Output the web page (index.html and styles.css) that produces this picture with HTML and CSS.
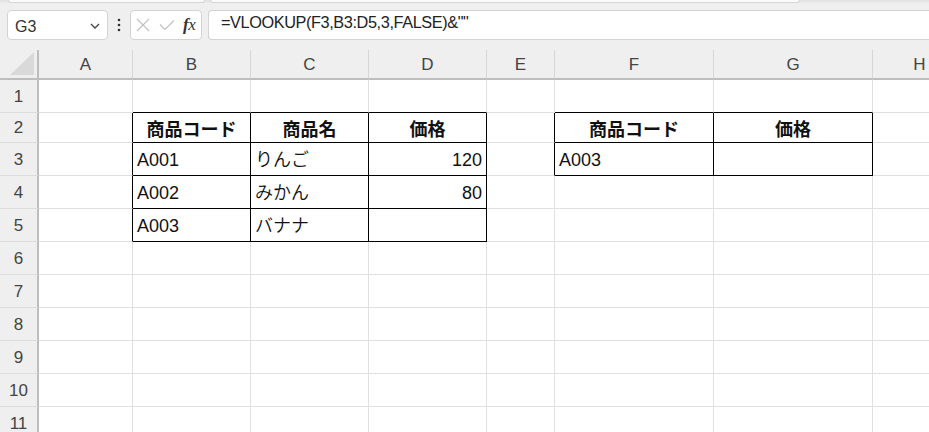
FILE: index.html
```html
<!DOCTYPE html>
<html lang="ja">
<head>
<meta charset="utf-8">
<link rel="stylesheet" href="styles.css">
</head>
<body>
<div class="app">
  <div class="ribbon-edge"><div class="rb rb1"></div><div class="rb rb2"></div></div>
  <div class="fbar">
    <div class="namebox">
      <span class="nb-text">G3</span>
      <svg class="chev" width="10" height="6" viewBox="0 0 10 6"><path d="M1 1 L5 5 L9 1" fill="none" stroke="#444" stroke-width="1.3"/></svg>
    </div>
    <div class="more">
      <svg width="4" height="14" viewBox="0 0 4 14"><circle cx="2" cy="2" r="1.3" fill="#333"/><circle cx="2" cy="7" r="1.3" fill="#333"/><circle cx="2" cy="12" r="1.3" fill="#333"/></svg>
    </div>
    <div class="btns">
      <svg class="ico" width="14" height="14" viewBox="0 0 14 14"><path d="M1 1 L13 13 M13 1 L1 13" stroke="#c2c2c2" stroke-width="1.2" fill="none"/></svg>
      <svg class="ico" width="16" height="12" viewBox="0 0 16 12"><path d="M1 5.5 L6 10.5 L15 1.5" stroke="#c2c2c2" stroke-width="1.2" fill="none"/></svg>
      <span class="fx"><i>f</i><span class="x">x</span></span>
    </div>
    <div class="formula"><span class="ftext">=VLOOKUP(F3,B3:D5,3,FALSE)&amp;""</span></div>
  </div>

  <div class="sheet">
    <!-- header row -->
    <div class="corner"><svg width="24" height="23" viewBox="0 0 24 23"><polygon points="24,0 24,23 0,23" fill="#d9d9d9"/></svg></div>
    <div class="ch">A</div><div class="ch">B</div><div class="ch">C</div><div class="ch">D</div><div class="ch">E</div><div class="ch">F</div><div class="ch">G</div><div class="ch">H</div>

    <!-- row 1 -->
    <div class="rh">1</div>
    <div class="c"></div><div class="c bb"></div><div class="c bb"></div><div class="c bb"></div><div class="c"></div><div class="c bb"></div><div class="c bb"></div><div class="c"></div>

    <!-- row 2 -->
    <div class="rh">2</div>
    <div class="c br"></div>
    <div class="c t hd">商品コード</div>
    <div class="c t hd">商品名</div>
    <div class="c t hd">価格</div>
    <div class="c br"></div>
    <div class="c t hd">商品コード</div>
    <div class="c t hd">価格</div>
    <div class="c"></div>

    <!-- row 3 -->
    <div class="rh">3</div>
    <div class="c br"></div>
    <div class="c t">A001</div>
    <div class="c t jp">りんご</div>
    <div class="c t num">120</div>
    <div class="c br"></div>
    <div class="c t">A003</div>
    <div class="c t"></div>
    <div class="c"></div>

    <!-- row 4 -->
    <div class="rh">4</div>
    <div class="c br"></div>
    <div class="c t">A002</div>
    <div class="c t jp">みかん</div>
    <div class="c t num">80</div>
    <div class="c"></div>
    <div class="c"></div>
    <div class="c"></div>
    <div class="c"></div>

    <!-- row 5 -->
    <div class="rh">5</div>
    <div class="c br"></div>
    <div class="c t">A003</div>
    <div class="c t jp">バナナ</div>
    <div class="c t"></div>
    <div class="c"></div><div class="c"></div><div class="c"></div><div class="c"></div>

    <div class="rh">6</div>
    <div class="c"></div><div class="c"></div><div class="c"></div><div class="c"></div><div class="c"></div><div class="c"></div><div class="c"></div><div class="c"></div>
    <div class="rh">7</div>
    <div class="c"></div><div class="c"></div><div class="c"></div><div class="c"></div><div class="c"></div><div class="c"></div><div class="c"></div><div class="c"></div>
    <div class="rh">8</div>
    <div class="c"></div><div class="c"></div><div class="c"></div><div class="c"></div><div class="c"></div><div class="c"></div><div class="c"></div><div class="c"></div>
    <div class="rh">9</div>
    <div class="c"></div><div class="c"></div><div class="c"></div><div class="c"></div><div class="c"></div><div class="c"></div><div class="c"></div><div class="c"></div>
    <div class="rh">10</div>
    <div class="c"></div><div class="c"></div><div class="c"></div><div class="c"></div><div class="c"></div><div class="c"></div><div class="c"></div><div class="c"></div>
    <div class="rh">11</div>
    <div class="c"></div><div class="c"></div><div class="c"></div><div class="c"></div><div class="c"></div><div class="c"></div><div class="c"></div><div class="c"></div>
  </div>
</div>
</body>
</html>
```

FILE: styles.css
```css
* { box-sizing: border-box; }
html, body {
  margin: 0;
  padding: 0;
  width: 929px;
  height: 432px;
  overflow: hidden;
  background: #efefef;
  font-family: "Liberation Sans", "Noto Sans CJK JP", sans-serif;
}
.app {
  display: block;
  width: 929px;
  height: 432px;
  overflow: hidden;
}
.ribbon-edge {
  height: 3px;
  display: flex;
  gap: 5px;
  background: linear-gradient(#e2e2e2, #ebebeb);
}
.rb {
  height: 3px;
  background: #fafafa;
  border: 1px solid #d6d6d6;
  border-top: none;
  border-radius: 0 0 4px 4px;
}
.rb1 { margin-left: 8px; width: 197px; }
.rb2 { width: 590px; }

.fbar {
  display: flex;
  align-items: stretch;
  height: 30px;
  margin-top: 7px;
  margin-bottom: 10px;
}
.namebox {
  width: 101px;
  flex: none;
  margin-left: 7px;
  background: #fff;
  border: 1px solid #d3d3d3;
  border-radius: 4px;
  display: flex;
  align-items: center;
  justify-content: space-between;
  padding: 4px 7px 0 7px;
}
.nb-text {
  font-size: 16px;
  color: #333;
}
.chev { margin-top: -3px; }
.more {
  width: 22px;
  flex: none;
  display: flex;
  align-items: center;
  justify-content: center;
}
.btns {
  width: 72px;
  flex: none;
  background: #fff;
  border: 1px solid #d3d3d3;
  border-radius: 4px;
  display: flex;
  align-items: center;
  padding: 0 5px 0 5px;
  gap: 9px;
}
.fx {
  font-family: "Liberation Serif", serif;
  font-size: 17px;
  color: #333;
  margin-left: -1px;
  font-style: italic;
  letter-spacing: -0.5px;
}
.fx i { font-weight: bold; }
.formula {
  flex: 1;
  margin-left: 6px;
  background: #fff;
  border: 1px solid #d3d3d3;
  border-right: none;
  border-radius: 4px 0 0 4px;
  padding: 1px 0 0 12px;
}
.ftext {
  font-size: 16.3px;
  letter-spacing: -0.4px;
  line-height: 20px;
  color: #222;
}

.sheet {
  display: grid;
  grid-template-columns: 39px 94px 118px 118px 118px 68px 159px 159px 94px;
  grid-template-rows: 30px 33px 30px repeat(9, 33px);
  background: #fff;
  width: 968px;
}
.corner {
  background: #efefef;
  border-right: 2px solid #bdbdbd;
  border-bottom: 2px solid #bdbdbd;
  display: flex;
  align-items: flex-end;
  justify-content: flex-end;
  padding: 0 3px 3px 0;
}
.ch {
  background: #efefef;
  border-bottom: 2px solid #bdbdbd;
  border-right: 1px solid #d6d6d6;
  display: flex;
  align-items: center;
  justify-content: center;
  font-size: 17px;
  color: #444;
  padding-top: 2px;
}
.rh {
  background: #efefef;
  border-right: 2px solid #bdbdbd;
  border-bottom: 1px solid #dcdcdc;
  display: flex;
  align-items: center;
  justify-content: center;
  font-size: 17px;
  color: #444;
  padding-top: 1px;
}
.c {
  border-right: 1px solid #e0e0e0;
  border-bottom: 1px solid #e0e0e0;
  display: flex;
  align-items: center;
  padding: 1px 4px 0 4px;
  font-size: 18px;
  line-height: 20px;
  color: #111;
  white-space: nowrap;
}
.c.bb { border-bottom-color: #000; }
.c.br { border-right-color: #000; }
.c.t {
  border-right-color: #000;
  border-bottom-color: #000;
}
.c.jp {
  font-family: "Noto Sans CJK JP", sans-serif;
  font-weight: 350;
  padding-top: 0;
  padding-bottom: 2px;
}
.c.hd {
  justify-content: center;
  font-weight: bold;
  font-family: "Noto Sans CJK JP", sans-serif;
}
.c.num { justify-content: flex-end; }
```
